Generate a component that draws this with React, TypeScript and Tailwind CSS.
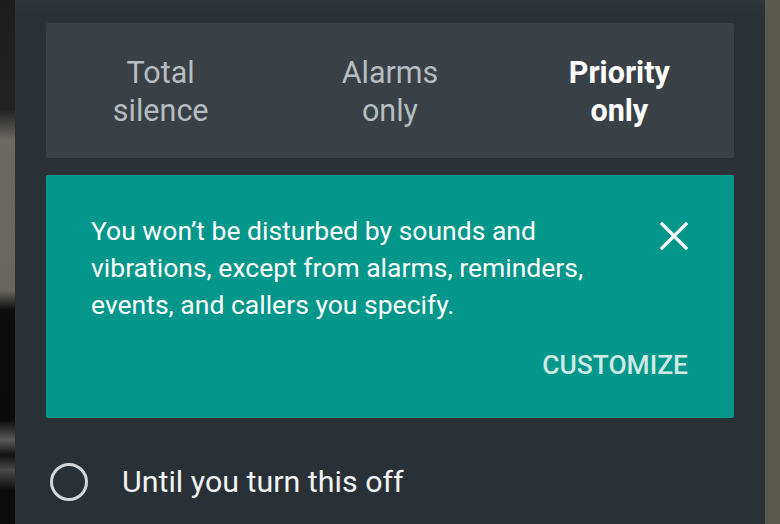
import React from "react";

const modes = [
  { top: "Total", bottom: "silence", active: false },
  { top: "Alarms", bottom: "only", active: false },
  { top: "Priority", bottom: "only", active: true },
];

export default function App() {
  return (
    <div className="flex w-[780px] h-[524px] overflow-hidden font-['Roboto',sans-serif] bg-[#2a3136]">
      {/* blurred background behind the sheet */}
      <div className="w-[15px] shrink-0 bg-[linear-gradient(to_bottom,#1d1d1e_0px,#222_110px,#6c6962_140px,#6a665f_290px,#0d0d0d_310px,#0b0b0b_420px,#5a5a5a_440px,#111_455px,#4a4a4a_470px,#0c0c0c_490px,#0c0c0c_524px)]" />

      <div className="flex-1 flex flex-col px-[31px] pt-[23px] bg-[linear-gradient(to_bottom,#30373b_0px,#2a3136_12px,#2a3136_100%)]">
        <div className="grid grid-cols-3 h-[135px] pt-[2px] bg-[#394146] rounded-[2px]">
          {modes.map((m) => (
            <div
              key={m.top}
              className={`flex flex-col items-center justify-center text-[30.5px] leading-[38px] ${
                m.active ? "text-white font-bold" : "text-[#b5bdc1]"
              }`}
            >
              <span>{m.top}</span>
              <span>{m.bottom}</span>
            </div>
          ))}
        </div>

        <div className="mt-[17px] h-[243px] bg-[#03968a] rounded-[2px] pt-[37px] pl-[45px] pr-[46px] flex flex-col">
          <div className="flex justify-between">
            <p className="text-[26.5px] leading-[37px] text-white w-[505px]">
              You won’t be disturbed by sounds and vibrations, except from alarms,
              reminders, events, and callers you specify.
            </p>
            <svg width="28" height="28" viewBox="0 0 28 28" className="mt-[10px] shrink-0">
              <path d="M2 2 L26 26 M26 2 L2 26" stroke="#ffffff" strokeWidth="3.2" strokeLinecap="square" />
            </svg>
          </div>
          <div className="flex justify-end mt-[27px]">
            <span className="text-[26.4px] leading-[30px] font-medium text-[#cfeae6]">
              CUSTOMIZE
            </span>
          </div>
        </div>

        <div className="flex items-center mt-[44px] h-[40px] pl-[4px]">
          <span className="w-[38px] h-[38px] rounded-full border-[3px] border-[#d3d7d9]" />
          <span className="ml-[34px] text-[30.4px] text-[#f1f3f4]">Until you turn this off</span>
        </div>
      </div>

      <div className="w-[15px] shrink-0 bg-[#5b5850]" />
    </div>
  );
}
